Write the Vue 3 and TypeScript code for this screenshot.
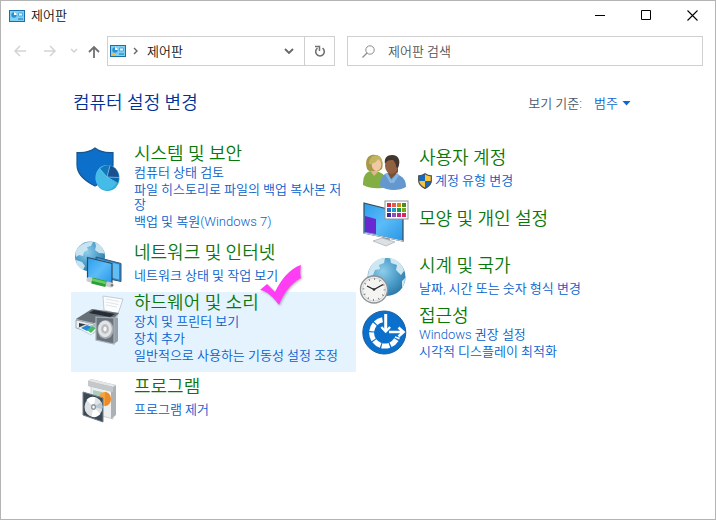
<script setup lang="ts">
import { ref } from 'vue'

interface Category {
  id: string
  title: string
  links: string[]
  shielded?: boolean
  active?: boolean
}

const columns: Category[][] = [
  [
    {
      id: 'system',
      title: '시스템 및 보안',
      links: ['컴퓨터 상태 검토', '파일 히스토리로 파일의 백업 복사본 저장', '백업 및 복원(Windows 7)'],
    },
    { id: 'network', title: '네트워크 및 인터넷', links: ['네트워크 상태 및 작업 보기'] },
    {
      id: 'hardware',
      title: '하드웨어 및 소리',
      links: ['장치 및 프린터 보기', '장치 추가', '일반적으로 사용하는 기동성 설정 조정'],
      active: true,
    },
    { id: 'programs', title: '프로그램', links: ['프로그램 제거'] },
  ],
  [
    { id: 'users', title: '사용자 계정', links: ['계정 유형 변경'], shielded: true },
    { id: 'appearance', title: '모양 및 개인 설정', links: [] },
    { id: 'clock', title: '시계 및 국가', links: ['날짜, 시간 또는 숫자 형식 변경'] },
    { id: 'access', title: '접근성', links: ['Windows 권장 설정', '시각적 디스플레이 최적화'] },
  ],
]

const swatches: string[] = [
  '#d8283c', '#e85a4a', '#d08a10', '#4a8a28',
  '#2a6ad0', '#18a0c8', '#189a50', '#78a818',
  '#3a2a9a', '#8a50b8', '#b82890', '#d82858',
]

const query = ref('')
const view = ref('범주')
</script>

<template>
  <div class="window">
    <header class="titlebar">
      <svg class="panel-icon" viewBox="0 0 16 12" aria-hidden="true">
        <rect width="16" height="12" fill="#1b6fa8" />
        <rect x="1" y="1" width="14" height="10" fill="#7fd0f5" />
        <circle cx="5" cy="5" r="2.7" fill="#2b8fd0" />
        <path d="M5 5V2.3A2.7 2.7 0 0 1 7.7 5z" fill="#fff" />
        <path d="M2 9.5h4" stroke="#f0c040" />
        <path d="M9.5 3h4v3h-4z" fill="#d8f2ff" stroke="#3b9bd4" stroke-width=".8" />
        <path d="M9 9h5" stroke="#1d74ad" />
      </svg>
      <span class="caption">제어판</span>
      <div class="controls">
        <button type="button" aria-label="최소화">
          <svg viewBox="0 0 11 11"><path d="M0 5.5h10" stroke="#000" /></svg>
        </button>
        <button type="button" aria-label="최대화">
          <svg viewBox="0 0 11 11"><path d="M.5 .5h9v9h-9z" fill="none" stroke="#000" /></svg>
        </button>
        <button type="button" aria-label="닫기">
          <svg viewBox="0 0 11 11"><path d="M.5 .5l10 10M10.5 .5l-10 10" stroke="#000" stroke-width="1.1" /></svg>
        </button>
      </div>
    </header>

    <div class="toolbar">
      <div class="nav">
        <button type="button" aria-label="뒤로" disabled>
          <svg width="14" height="12" viewBox="0 0 14 12"><path d="M13 6H2M7 1L2 6l5 5" fill="none" stroke="#d4d4d4" stroke-width="1.5" /></svg>
        </button>
        <button type="button" aria-label="앞으로" disabled>
          <svg width="14" height="12" viewBox="0 0 14 12"><path d="M1 6h11M7 1l5 5-5 5" fill="none" stroke="#d4d4d4" stroke-width="1.5" /></svg>
        </button>
        <button class="recent" type="button" aria-label="최근 위치" disabled>
          <svg width="8" height="6" viewBox="0 0 8 6"><path d="M1 1l3 3 3-3" fill="none" stroke="#cfcfcf" stroke-width="1.3" /></svg>
        </button>
        <button type="button" aria-label="위로">
          <svg width="12" height="13" viewBox="0 0 12 13"><path d="M6 13V2M1 7l5-5 5 5" fill="none" stroke="#707070" stroke-width="1.8" /></svg>
        </button>
      </div>
      <nav class="address">
        <svg class="panel-icon" viewBox="0 0 16 12" aria-hidden="true">
          <rect width="16" height="12" fill="#1b6fa8" />
          <rect x="1" y="1" width="14" height="10" fill="#7fd0f5" />
          <circle cx="5" cy="5" r="2.7" fill="#2b8fd0" />
          <path d="M5 5V2.3A2.7 2.7 0 0 1 7.7 5z" fill="#fff" />
          <path d="M2 9.5h4" stroke="#f0c040" />
          <path d="M9.5 3h4v3h-4z" fill="#d8f2ff" stroke="#3b9bd4" stroke-width=".8" />
          <path d="M9 9h5" stroke="#1d74ad" />
        </svg>
        <svg class="crumb" viewBox="0 0 5 8" aria-hidden="true"><path d="M1 1l3 3-3 3" fill="none" stroke="#666" stroke-width="1.4" /></svg>
        <a class="place" href="#">제어판</a>
        <button class="drop" type="button" aria-label="이전 위치">
          <svg width="10" height="7" viewBox="0 0 10 7"><path d="M1 1l4 4 4-4" fill="none" stroke="#666" stroke-width="1.8" /></svg>
        </button>
        <button class="reload" type="button" aria-label="새로 고침">
          <svg width="12" height="13" viewBox="0 0 12 13">
            <path d="M8.5 3.2A4.3 4.3 0 1 1 3.5 3.2" fill="none" stroke="#707070" stroke-width="1.6" />
            <path d="M1 1.5h4.500V6" fill="none" stroke="#707070" stroke-width="1.5" />
          </svg>
        </button>
      </nav>
      <label class="search">
        <svg width="13" height="13" viewBox="0 0 13 13" aria-hidden="true">
          <circle cx="8" cy="5" r="4.2" fill="none" stroke="#8c8c8c" />
          <path d="M5 8L.5 12.500" stroke="#8c8c8c" stroke-width="1.2" />
        </svg>
        <input v-model="query" type="search" placeholder="제어판 검색" aria-label="제어판 검색" />
      </label>
    </div>

    <main>
      <div class="heading">
        <h1>컴퓨터 설정 변경</h1>
        <label class="viewby">
          <span>보기 기준:</span>
          <span class="picker">
            <select v-model="view"><option>범주</option></select>
            <svg width="9" height="5" viewBox="0 0 9 5" aria-hidden="true"><path d="M.5 0h8l-4 4.500z" fill="#0f66cc" /></svg>
          </span>
        </label>
      </div>

      <div class="columns">
        <div v-for="(column, c) in columns" :key="c" class="column">
          <section
            v-for="item in column"
            :key="item.id"
            class="item"
            :class="{ active: item.active, single: item.links.length === 1, bare: item.links.length === 0 }"
          >
            <svg class="icon" viewBox="0 0 48 44" aria-hidden="true">
              <defs>
                <radialGradient :id="`globe-${item.id}`" cx=".4" cy=".35" r=".7">
                  <stop offset="0" stop-color="#8fcdea" />
                  <stop offset=".6" stop-color="#4a9bc8" />
                  <stop offset="1" stop-color="#2c76a5" />
                </radialGradient>
                <linearGradient :id="`screen-${item.id}`" x1="0" y1="0" x2="1" y2="1">
                  <stop offset="0" stop-color="#2b9cec" />
                  <stop offset=".5" stop-color="#5cbcf8" />
                  <stop offset="1" stop-color="#2795e6" />
                </linearGradient>
              </defs>

              <g v-if="item.id === 'system'">
                <path d="M20 3c5 4 11 5 18 4.500V20c0 10-8 16-18 21C10 36 2 30 2 20V7.500C9 8 15 7 20 3z" fill="#0c6fca" stroke="#17568f" stroke-width="1.2" />
                <ellipse cx="32.5" cy="33" rx="12" ry="13" fill="#2fa9dc" />
                <ellipse cx="31.5" cy="32.5" rx="11" ry="12.5" fill="#45bbe8" />
                <path d="M32 32L25 24C28 20.500 32 20 35 20.500z" fill="#1478b8" />
                <path d="M32 32l3-11.500c5 1.500 8.500 6 9 12z" fill="#1c4f91" />
                <path d="M32 32l12 .5c0 2-.5 4-1.500 6z" fill="#0a67a9" />
                <path d="M32 32l-7-8M32 32l3-11.500M32 32l12 .5M32 32l10.500 6" stroke="#71d2f5" stroke-width=".7" />
              </g>

              <g v-else-if="item.id === 'network'">
                <circle cx="15" cy="12.5" r="15" :fill="`url(#globe-${item.id})`" />
                <path d="M3 4C7-1 13-2.500 18-2l-2 4-4 1 1 3-4 2-1 4-4-1-3 2C0 9 1 6 3 4zM1 16l6 2 3 4-2 4c-4-2-7-6-7-10zM20-1.500c5 1.500 9 6 9.500 11L24 9l-4-3 1-4z" fill="#d4eaf3" opacity=".9" />
                <path d="M21 13l25 6.500v18L21 32z" fill="#2d86cd" stroke="#355a75" />
                <path d="M23 15l21 5.500v15L23 30z" fill="#60bdf5" />
                <path d="M12.5 13.500L37 19.500V39.500L12.500 33.500z" :fill="`url(#screen-${item.id})`" stroke="#2c4b60" stroke-width="1.2" />
                <path d="M14 35.500l22 5.500" stroke="#c9ced1" stroke-width="5" stroke-linecap="round" />
                <path d="M17 36.500l14 3.500" stroke="#2f9d38" stroke-width="6" />
                <path d="M17 35.500l14 3.500" stroke="#65cf62" stroke-width="2.5" />
                <circle cx="37" cy="41.2" r="1.3" fill="#777" />
              </g>

              <g v-else-if="item.id === 'hardware'">
                <path d="M28 2l20 3-5 15-14-4z" fill="#fcfdfe" stroke="#b8c0c7" stroke-width=".8" />
                <path d="M31 5l13 2.500M30.500 8l13 2.500M31 11l11 2" stroke="#e0e5e9" />
                <path d="M1 25l16-10 27 4-4 11-19 8L1 33z" fill="#c2c8cd" />
                <path d="M1 25l16-10 27 4-5 5-20 5z" fill="#676f77" />
                <path d="M14 19l5-3 21 4-5 3z" fill="#252c33" />
                <path d="M1 26l18 4v9L1 34z" fill="#edf0f2" stroke="#858d94" stroke-width=".7" />
                <path d="M4 29l15 3v5L4 33z" fill="#333d45" />
                <path d="M3 34l9-4 12 4-8 7z" fill="#f8fafb" stroke="#aab3ba" stroke-width=".6" />
                <path d="M6 34l6-3 5 2-5 4z" fill="#2688d0" />
                <path d="M12 36l5-4 4 2-5 5z" fill="#49b96a" />
                <path d="M37 23l6 1v23l-4 3z" fill="#98a0a7" />
                <path d="M21 23l18 1v26l-18-4z" fill="#69737e" stroke="#a9b1b8" stroke-width="1.2" />
                <ellipse cx="30.5" cy="35.5" rx="8" ry="9.5" fill="#a7adb2" />
                <ellipse cx="30" cy="35" rx="6.8" ry="8.2" fill="#e2e4e5" />
                <ellipse cx="30" cy="35" rx="4" ry="5" fill="#c0c4c7" />
                <ellipse cx="30" cy="35" rx="2.2" ry="3" fill="#f8f8f8" stroke="#90969b" stroke-width=".6" />
              </g>

              <g v-else-if="item.id === 'programs'">
                <path d="M16 7l22 4v30l-22-6z" fill="#eceff0" stroke="#bdc0c3" stroke-width=".7" />
                <path d="M36 10l5-2v29l-5 4z" fill="#acb1b5" />
                <path d="M18 12l9 2v12l-9-2z" fill="#a9cfbd" />
                <ellipse cx="29.5" cy="21" rx="6" ry="7" fill="#f4a23c" />
                <path d="M30 14a6 7 0 0 1 0 14z" fill="#ed8b2c" />
                <path d="M13 3l3-2 25 6v6l-3 1-25-6z" fill="#aeb3b7" />
                <path d="M13 3l3-2 25 6-3 2z" fill="#e3e5e7" />
                <path d="M13 3v5l25 6V9z" fill="#c4c8cb" />
                <path d="M8 14l20 6v24L8 37z" fill="#3c4854" stroke="#71808d" />
                <ellipse cx="18.5" cy="29" rx="9" ry="10" fill="#dfe3e6" />
                <path d="M18.5 29l-7-7c3-3 6-4 9-2.500zM18.500 29l7 7c-3 3-6 4-9 2.500z" fill="#fff" />
                <path d="M18.5 29l8-5c1 3 1 5 .5 7z" fill="#b8c8d3" />
                <ellipse cx="18.5" cy="29" rx="2.5" ry="3" fill="#8c969e" />
                <ellipse cx="18.5" cy="29" rx="1.2" ry="1.5" fill="#fff" />
              </g>

              <g v-else-if="item.id === 'users'">
                <path d="M3 36c0-8 2-13 8-14l8 1c6 2 8 7 8 15-7 2-17 2-24-2z" fill="#83ad45" />
                <path d="M10 21l4 6 5-5v-5h-8z" fill="#e3b58e" />
                <path d="M7 20C4 10 9 5 15 6c7 0 9 8 7 14l-3 2H9z" fill="#a79848" />
                <ellipse cx="16.5" cy="15.5" rx="4.800" ry="6.500" fill="#f0c8a3" />
                <path d="M9 15c4 0 8-2 9-5l4 4c0-5-2-7-6-7.500-4 0-7 3-7 8.500z" fill="#c3b462" />
                <path d="M20 37c0-8 3-12 8-13l8 1c7 2 10 6 10 13-7 4-19 4-26-1z" fill="#6298ce" />
                <path d="M27 22l4 8 7-7v-5h-9z" fill="#795034" />
                <path d="M27 24l4.500 7 6-7 1.500 2-5 8h-4l-5-9z" fill="#87b4de" />
                <ellipse cx="31.5" cy="16.5" rx="6.5" ry="8.500" fill="#916141" />
                <path d="M25 15c-1-6 2-9 7-9 7 0 9 6 6 13l-2-1c0-3-1-5-3-7-3 0-6 0-8 4z" fill="#42372f" />
              </g>

              <g v-else-if="item.id === 'appearance'">
                <path d="M23 37l7 2v5l-7-2z" fill="#a6acb0" />
                <path d="M13 42l9-3 13 4-9 4z" fill="#dce0e2" stroke="#a9afb3" stroke-width=".7" />
                <path d="M4 4l39 10v28L4 34z" :fill="`url(#screen-${item.id})`" stroke="#344a5c" stroke-width="1.2" />
                <path d="M5 17l11 3v15L5 33z" fill="#6a28d0" />
                <path d="M4 34l39 8" stroke="#d5d9dc" />
                <rect x="25" y="2" width="23" height="18" fill="#fff" stroke="#8d9299" />
                <rect
                  v-for="(color, i) in swatches"
                  :key="color"
                  :x="27 + (i % 4) * 5"
                  :y="4 + Math.floor(i / 4) * 5"
                  width="4"
                  height="4"
                  :fill="color"
                />
              </g>

              <g v-else-if="item.id === 'clock'">
                <circle cx="26.5" cy="20" r="19" :fill="`url(#globe-${item.id})`" />
                <path d="M11 9c3-5 8-8 14-8l-1 5-5 2 1 4-5 1-2 5-5 2c0-4 1-8 3-11zM30 1c7 1 13 7 14 13l-3 4-5-5 1-5-6-2zM42 24l3-3c0 4-1 7-3 10z" fill="#cfe7f0" />
                <circle cx="14" cy="32.5" r="13.5" fill="#f4f4f2" stroke="#8e9498" stroke-width="1.4" />
                <circle cx="14" cy="32.5" r="11.5" fill="none" stroke="#d3d6d7" />
                <circle cx="14" cy="32.5" r="10.5" fill="none" stroke="#666" stroke-width="1.8" stroke-dasharray=".8 4.7" />
                <path d="M7 29l7 3.500 9-5" fill="none" stroke="#282828" stroke-width="1.3" />
                <circle cx="14" cy="32.5" r="1.3" fill="#333" />
              </g>

              <g v-else>
                <circle cx="24.3" cy="25.5" r="21.5" fill="#0b70cc" stroke="#1b5a93" />
                <path d="M22.500 12.700A13.300 13.300 0 1 0 37.500 30" fill="none" stroke="#fff" stroke-width="5" stroke-dasharray="7.8 1.2" />
                <path d="M20.500 18l5.200 5.800 5.300-5.800" fill="none" stroke="#0b70cc" stroke-width="5" />
                <path d="M25.700 7v17" stroke="#0b70cc" stroke-width="5.5" />
                <path d="M25.700 7v17" stroke="#fff" stroke-width="3" />
                <path d="M21.300 20l4.400 4.600 4.400-4.600" fill="none" stroke="#fff" stroke-width="2.4" />
                <path d="M29 25h15M38.500 20.500L43.500 25l-5 4.500" fill="none" stroke="#fff" stroke-width="2.6" />
              </g>
            </svg>

            <div class="text">
              <h2><a href="#">{{ item.title }}</a></h2>
              <ul v-if="item.links.length">
                <li v-for="link in item.links" :key="link" :class="{ shielded: item.shielded }">
                  <svg v-if="item.shielded" class="uac" width="14" height="16" viewBox="0 0 14 16" aria-hidden="true">
                    <path d="M7 .8c2 1.400 4 2 6.300 2V8c0 3.500-3 5.700-6.300 7.400C3.700 13.700.7 11.500.7 8V2.800C3 2.800 5 2.200 7 .8z" fill="#f8c43c" />
                    <path d="M7 .8V8H.7V2.800C3 2.800 5 2.200 7 .8zM7 8h6.300c0 3.500-3 5.700-6.300 7.400z" fill="#1668bd" />
                    <path d="M7 .8c2 1.400 4 2 6.300 2V8c0 3.500-3 5.700-6.300 7.400C3.700 13.700.7 11.500.7 8V2.800C3 2.800 5 2.200 7 .8z" fill="none" stroke="#4d5052" stroke-width="1.2" />
                  </svg>
                  <a href="#">{{ link }}</a>
                </li>
              </ul>
            </div>

            <svg v-if="item.active" class="check" width="44" height="44" viewBox="0 0 44 44" aria-hidden="true">
              <path d="M1 26l7-6 8 8C22 16 30 5 42 1c-1 5-1 9 0 13-9 5-17 14-22 27C14 33 8 27 1 26z" fill="#ff3df5" />
            </svg>
          </section>
        </div>
      </div>
    </main>
  </div>
</template>

<style>
body {
  margin: 0;
}
</style>

<style scoped>
.window {
  box-sizing: border-box;
  min-height: 100vh;
  border: 1px solid #b4b4b4;
  background: #fff;
  color: #111;
  font-family: Roboto, 'Noto Sans CJK KR', sans-serif;
  font-size: 13px;
  font-weight: 350;
  line-height: 15px;
}

button {
  display: flex;
  align-items: center;
  justify-content: center;
  padding: 0;
  border: 0;
  background: none;
}

a {
  color: inherit;
  text-decoration: none;
}

a:hover {
  text-decoration: underline;
}

h1,
h2,
ul {
  margin: 0;
  padding: 0;
}

h1,
h2 {
  font-size: 18px;
  font-weight: 350;
  line-height: 22px;
}

svg {
  flex: none;
}

.titlebar {
  display: flex;
  align-items: center;
  height: 29px;
  padding-left: 8px;
}

.panel-icon {
  width: 16px;
  height: 12px;
}

.caption {
  margin-left: 6px;
}

.controls {
  display: flex;
  align-self: stretch;
  margin-left: auto;
}

.controls button {
  width: 46px;
}

.controls svg {
  width: 11px;
  height: 11px;
}

.toolbar {
  display: flex;
  gap: 12px;
  margin-top: 6px;
  padding: 0 12px;
}

.nav {
  display: flex;
  align-items: center;
  gap: 16px;
  margin-right: -5px;
}

.nav .recent {
  margin: 0 -6px 0 -3px;
}

.address,
.search {
  display: flex;
  align-items: center;
  box-sizing: border-box;
  height: 30px;
  border: 1px solid #d0d0d0;
}

.address {
  flex: 224 1 0;
  padding-left: 2px;
}

.crumb {
  width: 5px;
  height: 8px;
  margin: 0 9px 0 7px;
}

.place {
  flex: 1;
}

.drop {
  width: 30px;
  height: 28px;
}

.reload {
  width: 30px;
  height: 28px;
  border-left: 1px solid #d0d0d0;
}

.search {
  flex: 340 1 0;
  gap: 13px;
  padding-left: 14px;
}

.search input {
  flex: 1;
  min-width: 0;
  padding: 0;
  border: 0;
  outline: 0;
  background: none;
  color: #111;
  font: inherit;
  appearance: none;
}

.search input::placeholder {
  color: #555;
  opacity: 1;
}

main {
  padding: 26px 74px 24px 70px;
}

.heading {
  display: flex;
  align-items: center;
  justify-content: space-between;
  padding: 0 10px 0 2px;
}

h1 {
  color: #003399;
}

.viewby {
  display: flex;
  gap: 12px;
  color: #4c5a68;
}

.picker {
  display: flex;
  align-items: center;
}

.picker select {
  margin-right: -9px;
  padding: 0 13px 0 0;
  border: 0;
  background: none;
  color: #0f66cc;
  font: inherit;
  appearance: none;
}

.picker svg {
  pointer-events: none;
}

.columns {
  display: grid;
  grid-template-columns: 1fr 1fr;
  margin-top: 29px;
}

.column {
  display: flex;
  flex-direction: column;
  gap: 4px;
}

.column + .column {
  padding-top: 4px;
}

.item {
  position: relative;
  display: flex;
  align-items: flex-start;
  gap: 11px;
  padding: 0 8px 0 4px;
}

.item.active {
  background: #e5f3ff;
}

.icon {
  width: 48px;
  height: 44px;
  margin-top: 2px;
  overflow: visible;
}

.text {
  flex: 1;
  padding-bottom: 9px;
}

.single .text {
  padding-bottom: 5px;
}

.single ul {
  padding-top: 4px;
}

.bare {
  min-height: 54px;
}

.bare .text {
  padding-top: 11px;
}

h2 {
  color: #087808;
}

ul {
  display: flex;
  flex-direction: column;
  gap: 2px;
  color: #0560cc;
  list-style: none;
  word-break: break-all;
}

.shielded {
  display: flex;
  align-items: center;
  gap: 3px;
  height: 15px;
  margin-left: -1px;
}

.check {
  position: absolute;
  top: -28px;
  left: 188px;
  z-index: 1;
  filter: drop-shadow(1px 1px 1px rgb(0 0 0 / 30%));
}
</style>
